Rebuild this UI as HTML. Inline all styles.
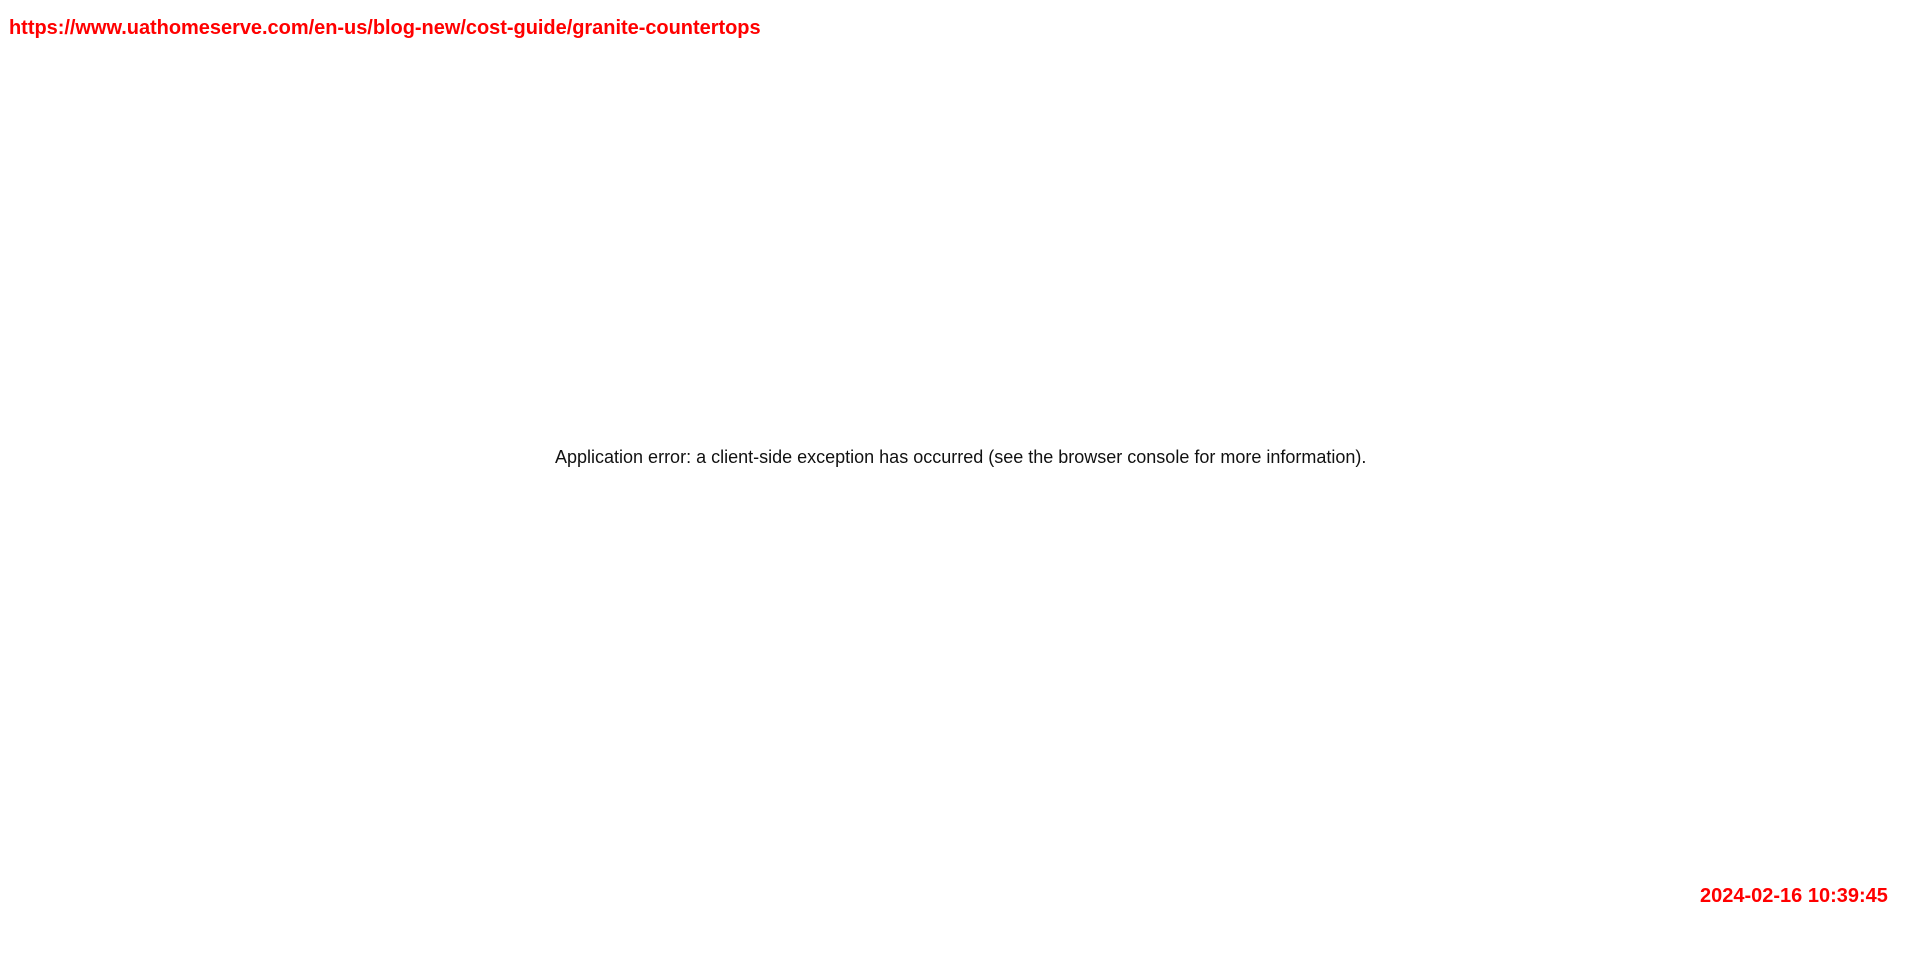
<!DOCTYPE html>
<html><head><meta charset="utf-8"><style>
html,body{margin:0;padding:0;background:#fff;width:1920px;height:963px;overflow:hidden;position:relative}
.r{position:absolute;color:#f00;font-family:"Liberation Sans",Arial,sans-serif;font-weight:bold;font-size:20px;white-space:nowrap}
#u{left:9px;top:17px;letter-spacing:-0.03px}
#t{left:1700px;top:885px}
#m{position:absolute;left:555px;top:447px;font-family:"Liberation Sans",Arial,sans-serif;font-size:18px;color:#111;white-space:nowrap}
</style></head><body>
<div class="r" id="u">https://www.uathomeserve.com/en-us/blog-new/cost-guide/granite-countertops</div>
<div id="m">Application error: a client-side exception has occurred (see the browser console for more information).</div>
<div class="r" id="t">2024-02-16 10:39:45</div>
</body></html>
